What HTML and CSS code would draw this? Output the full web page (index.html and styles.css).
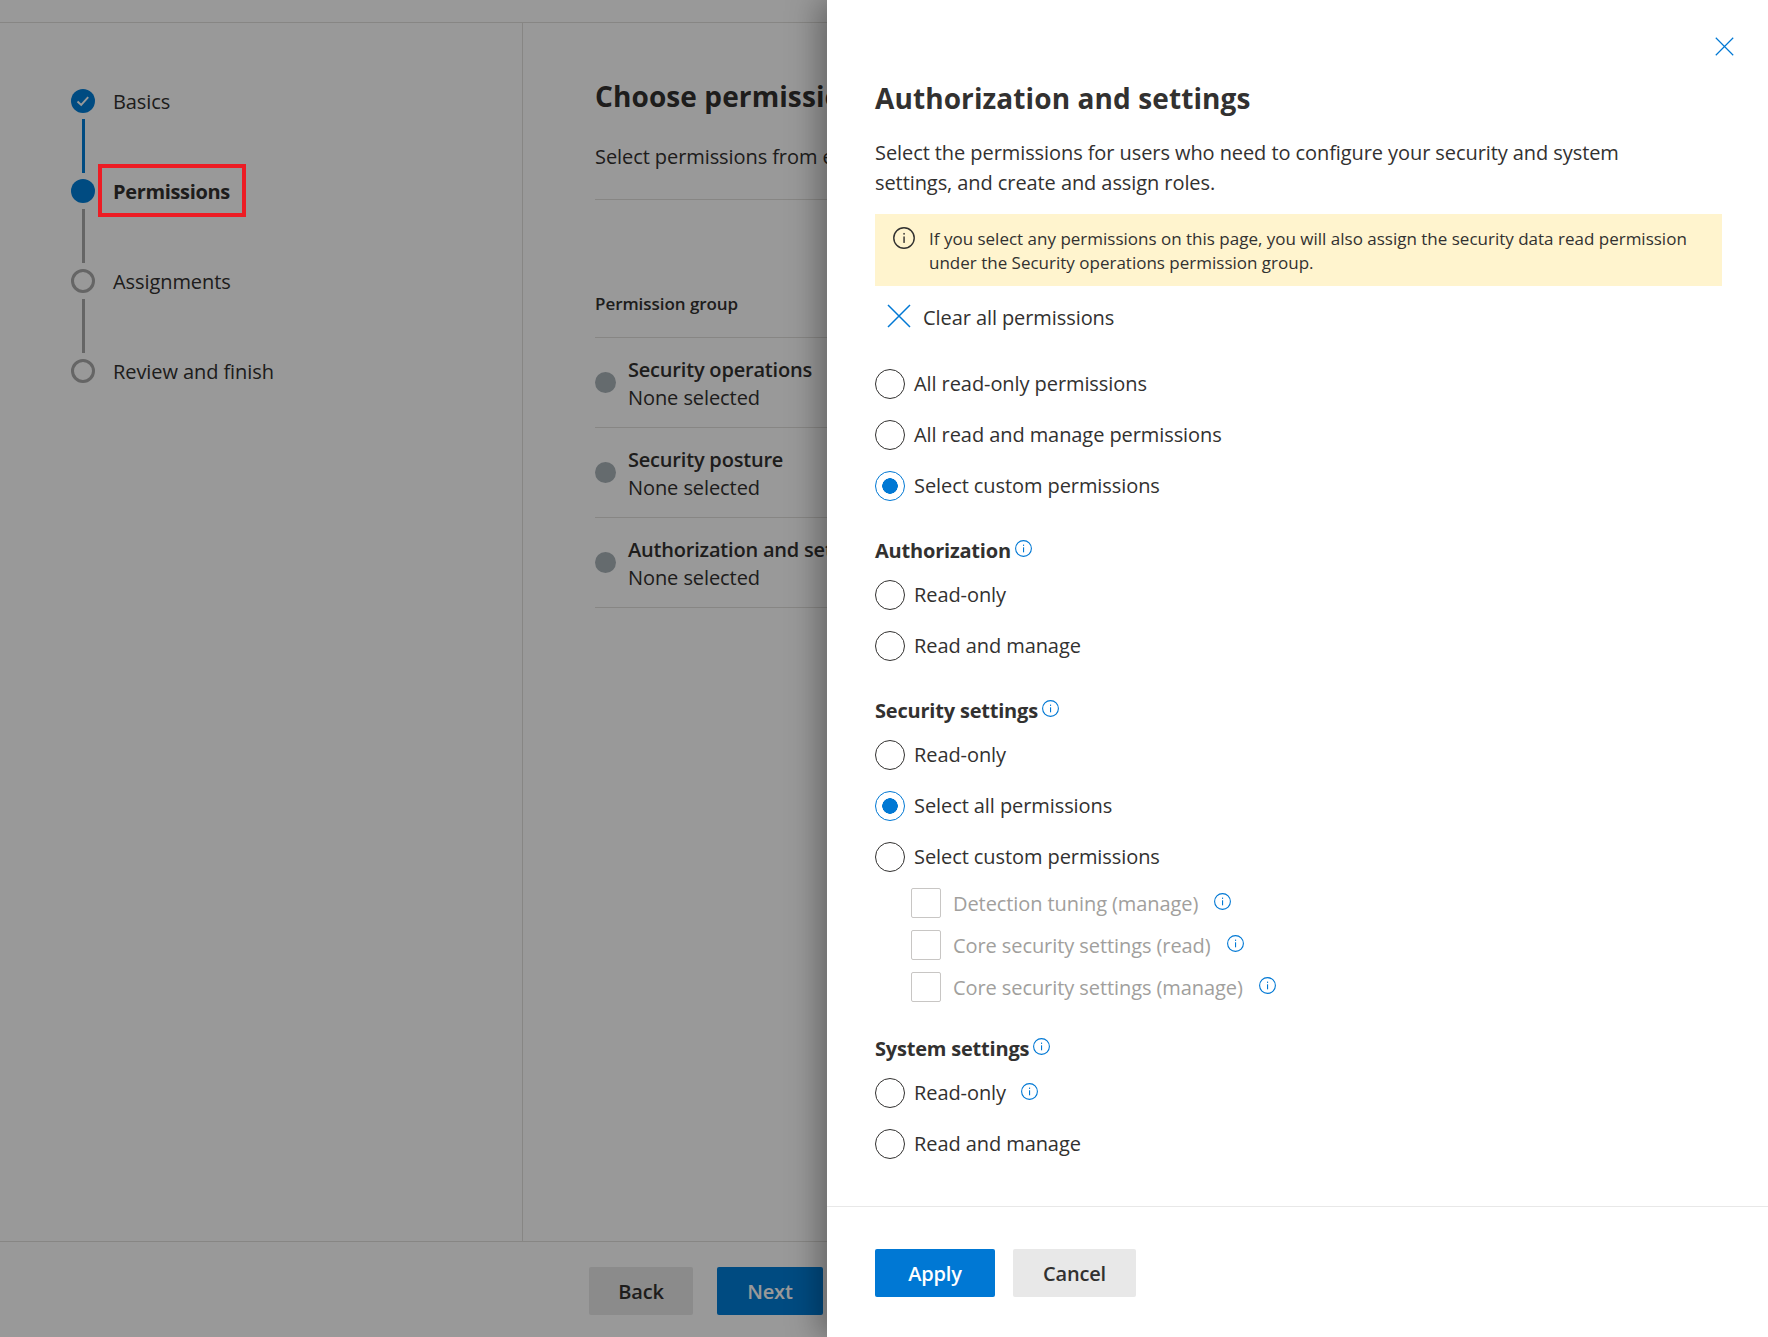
FILE: index.html
```html
<!DOCTYPE html>
<html lang="en">
<head>
    <meta charset="UTF-8">
    <title>Authorization and settings</title>
    <link rel="stylesheet" href="styles.css">
</head>
<body>
    <svg class="defs" width="0" height="0">
        <symbol id="info" viewBox="0 0 17 17">
            <circle cx="8.5" cy="8.5" r="7.9" fill="none" stroke="currentColor" stroke-width="1.1"/>
            <rect x="8" y="7.3" width="1.1" height="5" fill="currentColor"/>
            <rect x="8" y="4.6" width="1.1" height="1.3" fill="currentColor"/>
        </symbol>
        <symbol id="cross" viewBox="0 0 24 24">
            <path d="M1 1L23 23M23 1L1 23" fill="none" stroke="currentColor" stroke-width="1.5"/>
        </symbol>
    </svg>

    <div class="page">
        <div class="topbar"></div>
        <div class="wizard">
            <ul class="steps">
                <li class="step">
                    <div class="marker">
                        <span class="dot done">
                            <svg width="16" height="16" viewBox="0 0 16 16"><path d="M2.5 8.5L6.2 12L13.2 4.2" fill="none" stroke="#fff" stroke-width="1.9"/></svg>
                        </span>
                        <span class="line line-done"></span>
                    </div>
                    <span class="step-name">Basics</span>
                </li>
                <li class="step">
                    <div class="marker">
                        <span class="dot current"></span>
                        <span class="line"></span>
                    </div>
                    <span class="step-name step-active">Permissions</span>
                </li>
                <li class="step">
                    <div class="marker">
                        <span class="dot"></span>
                        <span class="line"></span>
                    </div>
                    <span class="step-name">Assignments</span>
                </li>
                <li class="step">
                    <div class="marker">
                        <span class="dot"></span>
                    </div>
                    <span class="step-name">Review and finish</span>
                </li>
            </ul>
            <div class="content">
                <h1 class="content-title">Choose permissions</h1>
                <p class="content-desc">Select permissions from each</p>
                <div class="table-head">Permission group</div>
                <div class="group-row">
                    <span class="group-dot"></span>
                    <div class="group-text">
                        <div class="group-name">Security operations</div>
                        <div>None selected</div>
                    </div>
                </div>
                <div class="group-row">
                    <span class="group-dot"></span>
                    <div class="group-text">
                        <div class="group-name">Security posture</div>
                        <div>None selected</div>
                    </div>
                </div>
                <div class="group-row">
                    <span class="group-dot"></span>
                    <div class="group-text">
                        <div class="group-name">Authorization and settings</div>
                        <div>None selected</div>
                    </div>
                </div>
            </div>
        </div>
        <div class="wizard-foot">
            <button class="btn btn-back">Back</button>
            <button class="btn btn-next">Next</button>
        </div>
    </div>

    <div class="overlay"></div>
    <!-- red annotation box sits on top of the dimmed page -->
    <div class="callout"></div>

    <aside class="panel">
        <div class="panel-top">
            <svg class="close" width="19" height="19"><use href="#cross"/></svg>
        </div>
        <div class="panel-body">
            <h2 class="panel-title">Authorization and settings</h2>
            <p class="panel-desc">Select the permissions for users who need to configure your security and system settings, and create and assign roles.</p>
            <div class="notice">
                <svg class="notice-icon" width="22" height="22"><use href="#info"/></svg>
                <div>If you select any permissions on this page, you will also assign the security data read permission under the Security operations permission group.</div>
            </div>
            <div class="clear-all">
                <svg class="clear-icon" width="24" height="24"><use href="#cross"/></svg>
                <span>Clear all permissions</span>
            </div>

            <div class="options options-first">
                <div class="radio-row"><span class="radio"></span>All read-only permissions</div>
                <div class="radio-row"><span class="radio"></span>All read and manage permissions</div>
                <div class="radio-row"><span class="radio checked"></span>Select custom permissions</div>
            </div>

            <h3 class="section-head">Authorization<svg class="info info-head" width="17" height="17"><use href="#info"/></svg></h3>
            <div class="options">
                <div class="radio-row"><span class="radio"></span>Read-only</div>
                <div class="radio-row"><span class="radio"></span>Read and manage</div>
            </div>

            <h3 class="section-head">Security settings<svg class="info info-head" width="17" height="17"><use href="#info"/></svg></h3>
            <div class="options">
                <div class="radio-row"><span class="radio"></span>Read-only</div>
                <div class="radio-row"><span class="radio checked"></span>Select all permissions</div>
                <div class="radio-row"><span class="radio"></span>Select custom permissions</div>
            </div>
            <div class="checks">
                <div class="check-row"><span class="check"></span>Detection tuning (manage)<svg class="info info-row" width="17" height="17"><use href="#info"/></svg></div>
                <div class="check-row"><span class="check"></span>Core security settings (read)<svg class="info info-row" width="17" height="17"><use href="#info"/></svg></div>
                <div class="check-row"><span class="check"></span>Core security settings (manage)<svg class="info info-row" width="17" height="17"><use href="#info"/></svg></div>
            </div>

            <h3 class="section-head section-last">System settings<svg class="info info-head" width="17" height="17"><use href="#info"/></svg></h3>
            <div class="options">
                <div class="radio-row"><span class="radio"></span>Read-only<svg class="info info-row" width="17" height="17"><use href="#info"/></svg></div>
                <div class="radio-row"><span class="radio"></span>Read and manage</div>
            </div>
        </div>
        <div class="panel-foot">
            <button class="btn btn-apply">Apply</button>
            <button class="btn btn-cancel">Cancel</button>
        </div>
    </aside>
</body>
</html>
```

FILE: styles.css
```css
*{
    margin:0;padding:0;
    box-sizing:border-box;
}
body{
    position:relative;
    height:1337px;
    overflow:hidden;
    background:#fff;
    color:#323130;
    font-family:"Open Sans","Liberation Sans",sans-serif;
    font-size:20px;
    letter-spacing:-0.08px;
}
.defs{
    position:absolute;
}

/* page under the overlay */
.page{
    height:1337px;
    display:flex;
    flex-direction:column;
}
.topbar{
    height:23px;
    flex:none;
    border-bottom:1px solid #e1dfdd;
}
.wizard{
    flex:1;
    display:flex;
    min-height:0;
}
.steps{
    width:523px;
    flex:none;
    list-style:none;
    padding:66px 0 0 71px;
    border-right:1px solid #e1dfdd;
}
.step{
    display:flex;
    gap:18px;
    height:90px;
}
.marker{
    width:24px;
    display:flex;
    flex-direction:column;
    align-items:center;
    gap:6px;
}
.dot{
    width:24px;
    height:24px;
    flex:none;
    display:flex;
    align-items:center;
    justify-content:center;
    border-radius:50%;
    border:3px solid #a8a8a8;
}
.dot.done,.dot.current{
    background:#007ed8;
    border:none;
}
.line{
    width:3px;
    height:54px;
    background:#a8a8a8;
}
.line-done{
    background:#007ed8;
}
.step-name{
    line-height:25px;
}
.step-active{
    font-weight:700;
    letter-spacing:-0.35px;
}
.content{
    flex:1;
    min-width:0;
    padding:49px 0 0 72px;
    white-space:nowrap;
}
.content-title{
    font-size:28px;
    font-weight:700;
    line-height:48px;
    letter-spacing:0.1px;
}
.content-desc{
    margin-top:24px;
    height:56px;
    line-height:26px;
    border-bottom:1px solid #e1dfdd;
}
.table-head{
    height:138px;
    padding-top:89px;
    font-size:17px;
    font-weight:600;
    letter-spacing:-0.05px;
    line-height:30px;
    border-bottom:1px solid #e1dfdd;
}
.group-row{
    height:90px;
    display:flex;
    align-items:center;
    gap:12px;
    line-height:28px;
    border-bottom:1px solid #e1dfdd;
}
.group-dot{
    width:21px;
    height:21px;
    flex:none;
    border-radius:50%;
    background:#a9b2b8;
}
.group-text{
    padding-top:3px;
}
.group-name{
    font-weight:600;
    letter-spacing:-0.2px;
}
.wizard-foot{
    height:96px;
    flex:none;
    display:flex;
    gap:24px;
    padding:25px 0 0 589px;
    border-top:1px solid #e1dfdd;
}

/* buttons */
.btn{
    height:48px;
    border:none;
    border-radius:2px;
    font-family:inherit;
    font-size:20px;
    font-weight:600;
    letter-spacing:-0.2px;
    color:#323130;
}
.btn-back{
    width:104px;
    background:#e8e8e8;
}
.btn-next{
    width:106px;
    background:#007ed8;
    color:#fff;
}
.btn-apply{
    width:120px;
    background:#0078d4;
    color:#fff;
}
.btn-cancel{
    width:123px;
    background:#e8e8e8;
}

.overlay{
    position:absolute;
    top:0;left:0;right:0;bottom:0;
    background:rgba(0,0,0,.4);
}
.callout{
    position:absolute;
    left:98px;
    top:164px;
    width:148px;
    height:53px;
    border:4px solid #ed1c24;
}

/* side panel */
.panel{
    position:absolute;
    top:0;right:0;bottom:0;
    width:941px;
    display:flex;
    flex-direction:column;
    background:#fff;
    box-shadow:-8px 0 30px rgba(0,0,0,.35);
}
.panel-top{
    display:flex;
    justify-content:flex-end;
    padding:37px 34px 0 0;
    height:56px;
    flex:none;
}
.close{
    color:#0078d4;
}
.panel-body{
    flex:1;
    padding:0 46px 0 48px;
}
.panel-title{
    margin-top:22px;
    font-size:28px;
    font-weight:700;
    line-height:40px;
    letter-spacing:0.1px;
}
.panel-desc{
    margin-top:20px;
    line-height:30px;
    max-width:780px;
}
.notice{
    margin-top:16px;
    display:flex;
    gap:14px;
    padding:13px 20px 11px 18px;
    background:#fff4ce;
    font-size:17px;
    line-height:24px;
    letter-spacing:0;
}
.notice-icon{
    flex:none;
}
.clear-all{
    margin-top:11px;
    height:40px;
    display:flex;
    align-items:center;
    gap:12px;
    padding-left:12px;
}
.clear-icon{
    color:#0078d4;
    margin-top:-2px;
}
.options-first{
    margin-top:21px;
}
.section-head{
    margin-top:25px;
    display:flex;
    align-items:center;
    font-size:20px;
    font-weight:700;
    letter-spacing:-0.2px;
    line-height:30px;
}
.section-head.section-last{
    margin-top:26px;
}
.radio-row{
    height:51px;
    display:flex;
    align-items:center;
    gap:9px;
}
.section-head + .options{
    margin-top:3px;
}
.radio{
    width:30px;
    height:30px;
    flex:none;
    border:1.3px solid #323130;
    border-radius:50%;
}
.radio.checked{
    border-color:#0078d4;
    background:radial-gradient(circle,#0078d4 7.5px,#fff 8px);
}
.checks{
    padding-left:36px;
}
.check-row{
    height:42px;
    display:flex;
    align-items:center;
    gap:12px;
    color:#a19f9d;
}
.check{
    width:30px;
    height:30px;
    flex:none;
    border:1px solid #c8c6c4;
    border-radius:2px;
}
.info{
    flex:none;
    color:#0078d4;
}
.info-head{
    margin:-5px 0 0 4px;
}
.info-row{
    margin:-3px 0 0 6px;
}
.check-row .info-row{
    margin-left:4px;
}
.panel-foot{
    flex:none;
    display:flex;
    gap:18px;
    height:131px;
    padding:42px 0 0 48px;
    border-top:1px solid #e8e8e8;
}
```
